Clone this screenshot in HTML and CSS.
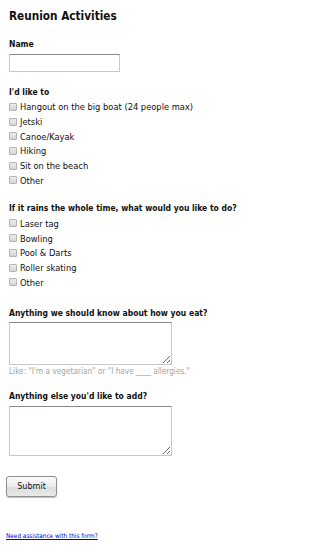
FILE: index.html
```html
<!DOCTYPE html>
<html>
<head>
<meta charset="utf-8">
<link rel="stylesheet" href="styles.css">
</head>
<body>
<form class="form">
  <h1 class="title">Reunion Activities</h1>
  <div class="field field-name">
    <label class="label">Name</label>
    <input class="text" type="text">
  </div>
  <div class="field field-like">
    <div class="label">I'd like to</div>
    <ul class="options">
      <li><input type="checkbox" class="cb"><span>Hangout on the big boat (24 people max)</span></li>
      <li><input type="checkbox" class="cb"><span>Jetski</span></li>
      <li><input type="checkbox" class="cb"><span>Canoe/Kayak</span></li>
      <li><input type="checkbox" class="cb"><span>Hiking</span></li>
      <li><input type="checkbox" class="cb"><span>Sit on the beach</span></li>
      <li><input type="checkbox" class="cb"><span>Other</span></li>
    </ul>
  </div>
  <div class="field field-rain">
    <div class="label">If it rains the whole time, what would you like to do?</div>
    <ul class="options options-rain">
      <li><input type="checkbox" class="cb"><span>Laser tag</span></li>
      <li><input type="checkbox" class="cb"><span>Bowling</span></li>
      <li><input type="checkbox" class="cb"><span>Pool &amp; Darts</span></li>
      <li><input type="checkbox" class="cb"><span>Roller skating</span></li>
      <li><input type="checkbox" class="cb"><span>Other</span></li>
    </ul>
  </div>
  <div class="field field-eat">
    <label class="label">Anything we should know about how you eat?</label>
    <textarea class="area area-short"></textarea>
    <div class="hint">Like: "I'm a vegetarian" or "I have ____ allergies."</div>
  </div>
  <div class="field field-else">
    <label class="label">Anything else you'd like to add?</label>
    <textarea class="area area-tall"></textarea>
  </div>
  <button type="button" class="submit">Submit</button>
  <a class="help" href="#">Need assistance with this form?</a>
</form>
</body>
</html>
```
FILE: styles.css
```css
html, body {
  margin: 0;
  padding: 0;
  background: #fff;
}
body {
  font-family: "DejaVu Sans Condensed", "DejaVu Sans", sans-serif;
  font-size: 9.25px;
  color: #111;
}
.form {
  display: flex;
  flex-direction: column;
  align-items: flex-start;
  padding: 8px 6px 0 6px;
}
.title {
  margin: 0 0 0 3px;
  font-size: 11.7px;
  line-height: 16px;
  font-weight: bold;
}
.field {
  display: flex;
  flex-direction: column;
  align-items: flex-start;
  margin-left: 3px;
}
.field-name { margin-top: 14px; }
.field-like { margin-top: 14px; }
.field-rain { margin-top: 14px; }
.field-eat { margin-top: 17px; }
.field-else { margin-top: 14px; }
.label {
  display: block;
  font-weight: bold;
  font-size: 8.5px;
  line-height: 12px;
}
.text {
  margin: 4px 0 0 0;
  width: 111px;
  height: 18px;
  box-sizing: border-box;
  border: 1px solid #c8c8c8;
  border-top-color: #8a8a8a;
  padding: 0 2px;
}
.options {
  list-style: none;
  margin: 1.5px 0 0 0;
  padding: 0;
}
.options-rain { margin-top: 2.5px; }
.options li {
  display: flex;
  align-items: center;
  height: 14.7px;
}
.cb {
  appearance: none;
  -webkit-appearance: none;
  margin: 0 3px 0 0;
  width: 8px;
  height: 8px;
  box-sizing: border-box;
  border: 1px solid #b4b4b4;
  border-radius: 1px;
  background: linear-gradient(#ececec, #d4d4d4);
}
.area {
  margin: 3px 0 0 0;
  width: 163px;
  box-sizing: border-box;
  border: 1px solid #c8c8c8;
  border-top-color: #8a8a8a;
  resize: vertical;
}
.area-short { height: 43px; }
.area-tall { height: 50px; margin-top: 4px; }
.hint {
  color: #a3a3a3;
  font-size: 8.2px;
  line-height: 10px;
  margin-top: 1px;
}
.submit {
  margin-top: 20px;
  width: 51px;
  height: 21px;
  font-family: inherit;
  font-size: 9px;
  color: #111;
  border: 1px solid #8f8f8f;
  border-radius: 3px;
  background: linear-gradient(#fbfbfb 0%, #ececec 50%, #dcdcdc 51%, #e8e8e8 100%);
  box-shadow: 0 1px 1px rgba(0,0,0,0.25);
  padding: 0;
}
.help {
  margin-top: 36px;
  font-size: 6.4px;
  line-height: 7px;
  color: #0000ee;
  text-decoration: underline;
}
```
